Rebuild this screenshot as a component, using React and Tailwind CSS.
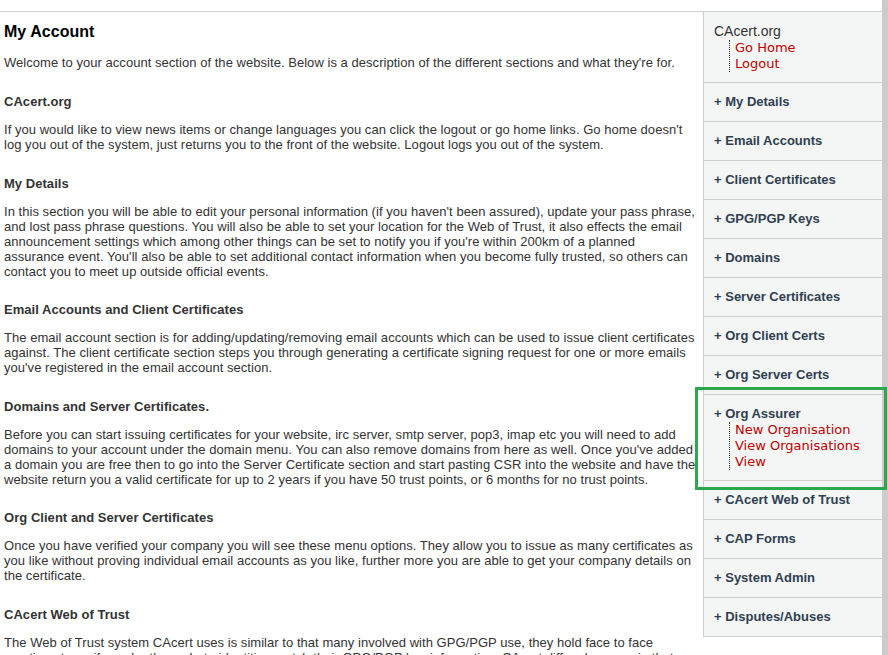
import React from 'react';

const sections = [
  {
    title: 'CAcert.org',
    text: "If you would like to view news items or change languages you can click the logout or go home links. Go home doesn't log you out of the system, just returns you to the front of the website. Logout logs you out of the system.",
  },
  {
    title: 'My Details',
    text: [
      "In this section you will be able to edit your personal information (if you haven't been assured), update your pass phrase, and lost pass phrase questions. You will also be able to set your location for the Web of Trust, it also effects the email announcement settings which among other things can be set to notify you if you're within 200km of a planned",
      "assurance event. You'll also be able to set additional contact information when you become fully trusted, so others can contact you to meet up outside official events.",
    ],
  },
  {
    title: 'Email Accounts and Client Certificates',
    text: "The email account section is for adding/updating/removing email accounts which can be used to issue client certificates against. The client certificate section steps you through generating a certificate signing request for one or more emails you've registered in the email account section.",
  },
  {
    title: 'Domains and Server Certificates.',
    text: "Before you can start issuing certificates for your website, irc server, smtp server, pop3, imap etc you will need to add domains to your account under the domain menu. You can also remove domains from here as well. Once you've added a domain you are free then to go into the Server Certificate section and start pasting CSR into the website and have the website return you a valid certificate for up to 2 years if you have 50 trust points, or 6 months for no trust points.",
  },
  {
    title: 'Org Client and Server Certificates',
    text: 'Once you have verified your company you will see these menu options. They allow you to issue as many certificates as you like without proving individual email accounts as you like, further more you are able to get your company details on the certificate.',
  },
  {
    title: 'CAcert Web of Trust',
    text: 'The Web of Trust system CAcert uses is similar to that many involved with GPG/PGP use, they hold face to face meetings to verify each others photo identities match their GPG/PGP key information. CAcert differs however in that we have modified things to work within the PKI framework.',
  },
];

const menu = [
  'My Details',
  'Email Accounts',
  'Client Certificates',
  'GPG/PGP Keys',
  'Domains',
  'Server Certificates',
  'Org Client Certs',
  'Org Server Certs',
  'Org Assurer',
  'CAcert Web of Trust',
  'CAP Forms',
  'System Admin',
  'Disputes/Abuses',
];

const linkFont = { fontFamily: '"DejaVu Sans", Verdana, sans-serif' };

const SubLinks = ({ links }) => (
  <div className="ml-[15px] mt-[1px] border-l border-dotted border-[#333] pl-[5px]" style={linkFont}>
    {links.map((l) => (
      <div key={l} className="text-[13px] leading-[16px] text-[#c00000]">
        {l}
      </div>
    ))}
  </div>
);

export default function App() {
  return (
    <div className="bg-white min-h-[655px] font-['Liberation_Sans',Arial,sans-serif] text-[#333]">
      <div className="h-[11px] w-[882px] border-b border-[#d3d3d3] box-content" />
      <div className="flex">
        {/* Main content */}
        <div className="w-[703px] pl-[4px] pr-[7px] pt-[11px] tracking-[0.04px]">
          <h1 className="text-[16px] leading-[18px] font-bold text-black mb-[14px]">My Account</h1>
          <p className="text-[13px] leading-[15px] mb-[24px]">
            Welcome to your account section of the website. Below is a description of the different sections and what they're for.
          </p>
          {sections.map((s) => (
            <div key={s.title}>
              <h3 className="text-[13px] leading-[15px] font-bold mb-[13px]">{s.title}</h3>
              <p className="text-[13px] leading-[15px] mb-[23.5px]">
                {Array.isArray(s.text) ? (
                  <>
                    {s.text[0]}
                    <br />
                    {s.text[1]}
                  </>
                ) : (
                  s.text
                )}
              </p>
            </div>
          ))}
        </div>

        {/* Sidebar */}
        <div className="w-[179px] self-start bg-[#f4f5f5] border-l border-[#cfcfcf]">
          <div className="pl-[10px] pt-[11px] pb-[10px] border-b border-[#cfcfcf]">
            <div className="text-[14px] leading-[16px] text-[#333]">CAcert.org</div>
            <SubLinks links={['Go Home', 'Logout']} />
          </div>
          {menu.map((m) =>
            m === 'Org Assurer' ? (
              <div key={m} className="relative pl-[10px] pt-[11px] pb-[10px] border-b border-[#cfcfcf]">
                <div className="text-[13px] leading-[15px] font-bold text-[#2f3f4f]">+ {m}</div>
                <div className="mt-[1px]">
                  <SubLinks links={['New Organisation', 'View Organisations', 'View']} />
                </div>
                <div className="absolute top-[-8px] left-[-9px] w-[192px] h-[103px] border-[3px] border-[#2aa84a] pointer-events-none" />
              </div>
            ) : (
              <div key={m} className="h-[39px] pl-[10px] pt-[11px] border-b border-[#cfcfcf]">
                <div className="text-[13px] leading-[15px] font-bold text-[#2f3f4f]">+ {m}</div>
              </div>
            )
          )}
        </div>

        {/* Right strip */}
        <div className="w-[6px] bg-[#cccccc] self-stretch min-h-[655px] -mt-[12px]" />
      </div>
    </div>
  );
}
